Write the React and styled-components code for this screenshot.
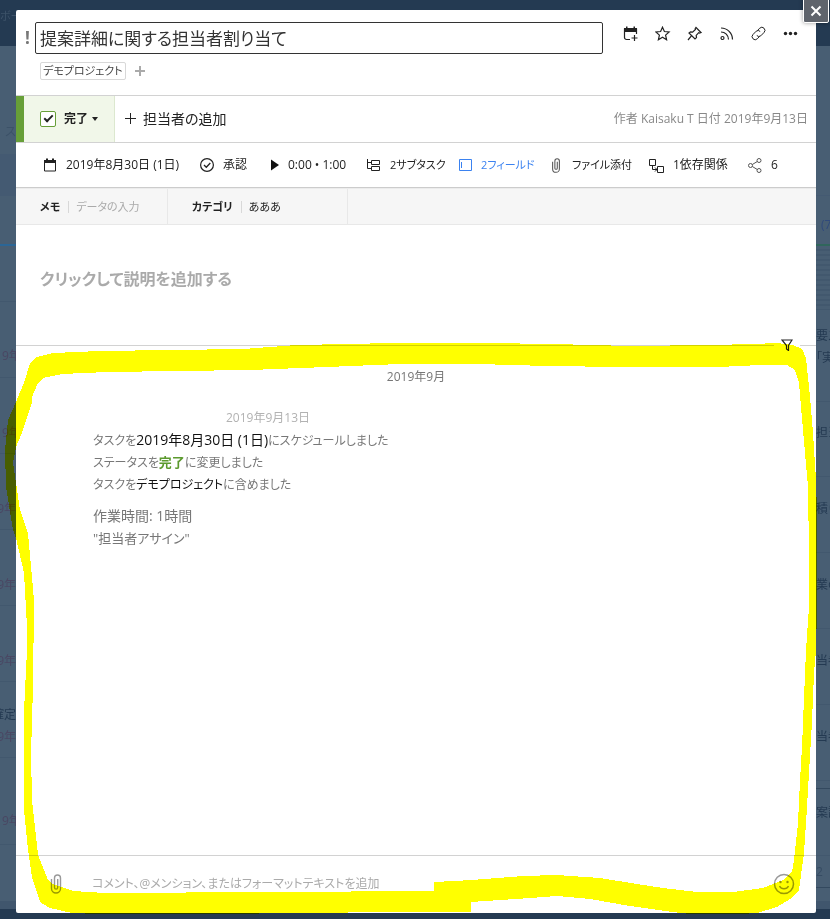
import styled, { createGlobalStyle, css } from "styled-components";

const GlobalStyle = createGlobalStyle`
  *, *::before, *::after {
    box-sizing: border-box;
  }
  body {
    margin: 0;
    background: #485e73;
  }
  body, button, input, select {
    font-family: "Open Sans", "Noto Sans CJK JP", sans-serif;
    font-feature-settings: "palt";
    font-size: 12px;
    line-height: 16px;
    color: #222;
  }
  button {
    padding: 0;
    border: 0;
    background: none;
    cursor: pointer;
  }
  svg {
    display: block;
    flex: none;
  }
`;

const Page = styled.div`
  position: relative;
  min-height: 100vh;
  display: flex;
`;

/* ---- dimmed board behind the dialog ---- */

const Board = styled.div`
  position: absolute;
  inset: 0;
  display: flex;
  flex-direction: column;
  overflow: hidden;
`;

const BoardHeader = styled.div`
  flex: none;
  height: 46px;
  padding-top: 4px;
  background: #243a52;
  color: #3d5269;
  font-size: 11px;
  line-height: 24px;
  white-space: nowrap;
`;

const BoardBody = styled.div`
  flex: 1;
  min-height: 0;
  display: flex;
  justify-content: space-between;
  background: #485e73;
`;

const BoardSide = styled.div`
  width: ${(p) => p.$width}px;
`;

const BoardFooter = styled.div`
  flex: none;
  height: 18px;
  border-top: 8px solid #40566d;
  background: #243a52;
`;

const BoardRow = styled.div`
  display: flex;
  flex-direction: column;
  justify-content: flex-end;
  align-items: ${(p) => (p.$end ? "flex-end" : "flex-start")};
  height: ${(p) => p.$height}px;
  padding-bottom: ${(p) => p.$bottom || 0}px;
  padding-left: ${(p) => p.$left || 0}px;
  border-bottom: ${(p) => p.$line || 1}px solid ${(p) => p.$border || "#42586e"};
  background: ${(p) => p.$bg || "transparent"};
  color: ${(p) => p.$color || "#243a52"};
  line-height: 22px;
  white-space: nowrap;
`;

const Thumbnail = styled.div`
  height: 64px;
  background: repeating-linear-gradient(#485e73 0 3px, #42586e 3px 5px);
`;

const DueDate = styled.span`
  color: #4a4763;
`;

/* ---- dialog ---- */

const Dialog = styled.main`
  position: relative;
  flex: 1;
  min-width: 0;
  display: flex;
  flex-direction: column;
  margin: 10px 14px 6px 16px;
  background: #fff;
  border-radius: 2px;
`;

const CloseButton = styled.button`
  position: absolute;
  top: -12px;
  right: -13px;
  width: 26px;
  height: 25px;
  display: flex;
  align-items: center;
  justify-content: center;
  border: 1px solid #fff;
  border-radius: 2px;
  background: #5f646c;
  box-shadow: 0 0 4px rgba(0, 0, 0, 0.4);
`;

const Header = styled.header`
  padding: 12px 17px 15px 8px;
  border-bottom: 1px solid #d2d2d2;
`;

const TitleRow = styled.div`
  display: flex;
  align-items: center;
`;

const Priority = styled.button`
  width: 11px;
  flex: none;
  font-size: 17px;
  font-weight: 700;
  color: #777;
  text-align: left;
  padding-left: 1px;
`;

const TitleInput = styled.input`
  flex: 1;
  min-width: 0;
  height: 32px;
  padding: 0 4px 2px;
  border: 1px solid #333;
  border-radius: 2px;
  outline: 0;
  background: #fff;
  font-size: 17px;
  color: #333;
`;

const TitleActions = styled.div`
  display: flex;
  align-items: center;
  gap: 16px;
  height: 24px;
  align-self: flex-start;
  margin-left: 20px;
`;

const ProjectRow = styled.div`
  display: flex;
  align-items: center;
  gap: 8px;
  margin: 8px 0 0 16px;
`;

const ProjectTag = styled.a`
  height: 18px;
  padding: 0 2px;
  border: 1px solid #d8d8d8;
  border-radius: 2px;
  font-size: 11px;
  line-height: 16px;
  color: #444;
  text-decoration: none;
`;

const StatusRow = styled.div`
  display: flex;
  align-items: center;
  height: 47px;
  border-bottom: 1px solid #d2d2d2;
`;

const Status = styled.div`
  display: flex;
  align-items: center;
  align-self: stretch;
  gap: 8px;
  width: 99px;
  padding-left: 16px;
  border-left: 8px solid #679f38;
  border-right: 1px solid #dce8cf;
  background: #f1f7e9;
`;

const StatusCheck = styled.input`
  appearance: none;
  width: 16px;
  height: 16px;
  margin: 0;
  border: 1px solid #679f38;
  border-radius: 2px;
  background: #fff;
  display: grid;
  place-items: center;

  &:checked::before {
    content: "";
    width: 9px;
    height: 5px;
    margin-bottom: 3px;
    border: solid #222;
    border-width: 0 0 2px 2px;
    rotate: -45deg;
  }
`;

const StatusButton = styled.button`
  display: flex;
  align-items: center;
  gap: 4px;
  font-weight: 600;
`;

const AddAssignee = styled.button`
  display: flex;
  align-items: center;
  gap: 6px;
  margin-left: 10px;
  font-size: 14px;
  line-height: 20px;
`;

const Author = styled.span`
  margin-left: auto;
  padding-right: 8px;
  font-size: 12px;
  color: #888;
`;

const Toolbar = styled.div`
  display: grid;
  grid-template-columns: 157px 70px 97px 91px 91px 100px 99px auto;
  align-items: center;
  height: 45px;
  padding-left: 27px;
  border-bottom: 1px solid #ccc;
`;

const Tool = styled.button`
  display: flex;
  align-items: center;
  gap: 9px;
  white-space: nowrap;
  font-size: ${(p) => (p.$kana ? 11 : 12)}px;
  color: ${(p) => (p.$active ? "#3b82f0" : "#222")};
`;

const Fields = styled.div`
  display: flex;
  height: 37px;
  border-top: 1px solid #ececec;
  border-bottom: 1px solid #e8e8e8;
  background: #f6f6f6;
`;

const Field = styled.label`
  display: flex;
  align-items: center;
  width: ${(p) => p.$width}px;
  padding-left: 24px;
  border-right: 1px solid #e8e8e8;
  font-size: 11px;
  font-weight: 600;
  white-space: nowrap;
`;

const FieldInput = styled.input`
  flex: 1;
  min-width: 0;
  height: 12px;
  margin-left: 8px;
  padding: 0 0 0 7px;
  border: 0;
  border-left: 1px solid #d8d8d8;
  outline: 0;
  background: none;
  font-size: 11px;

  &::placeholder {
    color: #aaa;
  }
`;

const Description = styled.button`
  height: 120px;
  padding: 0 24px 12px;
  text-align: left;
  font-size: 16px;
  font-weight: 600;
  color: #aaa;
`;

const Activity = styled.section`
  position: relative;
  flex: 1;
  border-top: 1px solid #d2d2d2;
  padding: 22px 16px;
`;

const FilterButton = styled.button`
  position: absolute;
  top: -9px;
  right: 16px;
  width: 26px;
  height: 16px;
  display: flex;
  align-items: center;
  justify-content: center;
  background: #fff;
`;

const Month = styled.h2`
  margin: 0;
  font-size: 12px;
  line-height: 18px;
  font-weight: 400;
  text-align: center;
  color: #777;
`;

const Entries = styled.div`
  margin: 21px 0 0 61px;
  color: #777;
`;

const EntryDate = styled.time`
  display: block;
  width: 350px;
  padding-bottom: 1px;
  font-size: 12px;
  line-height: 22px;
  text-align: center;
  color: #b2b2b2;
`;

const Entry = styled.p`
  margin: ${(p) => (p.$spaced ? "9px" : "0")} 0 0;
  font-size: ${(p) => p.$size || 12}px;
  line-height: 22px;
`;

const Strong = styled.span`
  color: #111;
  line-height: 16px;
  ${(p) =>
    p.$date &&
    css`
      font-size: 14px;
    `}
  ${(p) =>
    p.$done &&
    css`
      color: #5c9a2e;
      font-size: 13px;
      font-weight: 700;
    `}
`;

const Composer = styled.div`
  display: flex;
  align-items: center;
  height: 58px;
  padding: 0 21px 2px 33px;
  border-top: 1px solid #d2d2d2;
`;

const CommentInput = styled.input`
  flex: 1;
  min-width: 0;
  height: 24px;
  margin-left: 29px;
  padding: 0 0 1px;
  border: 0;
  outline: 0;
  background: none;
  font-size: 12px;

  &::placeholder {
    color: #aaa;
  }
`;

const Marker = styled.svg`
  position: absolute;
  inset: 0;
  width: 100%;
  height: 100%;
  pointer-events: none;
  mix-blend-mode: multiply;
`;

const Icon = ({ size = 14, height, color = "#222", children }) => (
  <svg
    width={size}
    height={height || size}
    viewBox={`0 0 ${size} ${height || size}`}
    fill="none"
    stroke={color}
    aria-hidden="true"
  >
    {children}
  </svg>
);

const Clip = ({ w, h, color }) => (
  <svg width={w} height={h} viewBox="0 0 14 20" fill="none" stroke={color} strokeWidth="1.4" aria-hidden="true">
    <path d="M2.500 5v9.500a4.500 4.500 0 0 0 9 0V4a3 3 0 0 0-6 0v9.500a1.600 1.600 0 0 0 3.200 0V5" />
  </svg>
);

const actions = [
  {
    label: "スケジュール",
    icon: (
      <>
        <path d="M7 13.500H3.500a2 2 0 0 1-2-2V3h12v5" strokeWidth="1.200" />
        <path d="M1 2h2V.5h1.500V2h6V.5H12V2h2v4H1z" fill="#222" stroke="none" />
        <path d="M11.500 9v6M8.500 12h6" strokeWidth="1.200" />
      </>
    ),
  },
  {
    label: "スター",
    icon: <path d="M7.500 1.200l1.900 4.300 4.700.5-3.500 3.100 1 4.600-4.100-2.400-4.100 2.400 1-4.600L.9 6l4.700-.5z" strokeWidth="1.200" />,
  },
  {
    label: "ピン",
    icon: (
      <path
        d="M9 1.500l5 5-1.500.5-.8-.3-2.500 2.700.3 2.200-1.500 1.400-6-6 1.500-1.200 2.100.3 2.800-2.600-.2-.8zM4.600 9.600L1 14"
        strokeWidth="1.200"
      />
    ),
  },
  {
    label: "フィード",
    icon: (
      <g strokeWidth="1.200">
        <circle cx="3.500" cy="12" r="1.500" />
        <path d="M2 6a7.500 7.500 0 0 1 7.500 7.500M2 2a11.500 11.500 0 0 1 11.500 11.500" />
      </g>
    ),
  },
  {
    label: "リンク",
    icon: (
      <path
        d="M6.500 4.500l2.200-2.300a3 3 0 0 1 4.300 4.300l-3.200 3.300a3 3 0 0 1-4-.3M8.500 10.500l-2.200 2.300A3 3 0 0 1 2 8.500l3.200-3.300a3 3 0 0 1 4 .3"
      />
    ),
  },
  {
    label: "その他",
    icon: (
      <g fill="#222" stroke="none">
        <circle cx="2.500" cy="7.500" r="1.700" />
        <circle cx="7.500" cy="7.500" r="1.700" />
        <circle cx="12.500" cy="7.500" r="1.700" />
      </g>
    ),
  },
];

const tools = [
  {
    text: "2019年8月30日 (1日)",
    icon: (
      <Icon>
        <path d="M1.500 3v10h11V3" />
        <path d="M1 2h2V.5h2V2h4V.5h2V2h2v3H1z" fill="#222" stroke="none" />
      </Icon>
    ),
  },
  {
    text: "承認",
    icon: (
      <Icon>
        <circle cx="7" cy="7" r="6.400" strokeWidth="1.200" />
        <path d="M4 7l2.300 2.300L10.300 5" strokeWidth="1.300" />
      </Icon>
    ),
  },
  {
    text: "0:00 • 1:00",
    icon: (
      <Icon size={9} height={14}>
        <path d="M1 1.500v11L9 7z" fill="#111" stroke="none" />
      </Icon>
    ),
  },
  {
    text: "2サブタスク",
    kana: true,
    icon: (
      <Icon>
        <path d="M.5 1v9.500h4M.5 4.500h4M4.500 2.500h8v4h-8zM4.500 8.500h8v4h-8z" />
      </Icon>
    ),
  },
  {
    text: "2フィールド",
    kana: true,
    active: true,
    icon: (
      <Icon color="#3b82f0">
        <path d="M1.500 1.500h12v11h-12zM3.500 4v6" />
      </Icon>
    ),
  },
  { text: "ファイル添付", kana: true, icon: <Clip w={14} h={15} color="#555" /> },
  {
    text: "1依存関係",
    icon: (
      <Icon size={15}>
        <path d="M.5 1.500h6v6h-6zM8.500 8.500h6v6h-6zM3.500 8v3.500H8M6 9.500l2 2-2 2" />
      </Icon>
    ),
  },
  {
    text: "6",
    icon: (
      <Icon height={15} color="#555">
        <circle cx="2.500" cy="7.500" r="2" />
        <circle cx="11" cy="2.500" r="2" />
        <circle cx="11" cy="12.500" r="2" />
        <path d="M4.300 6.500L9.300 3.500M4.300 8.500l5 3" />
      </Icon>
    ),
  },
];

const leftRows = [
  { height: 98, text: "ス", end: true, color: "#3c5268", border: "#485e73" },
  { height: 10, border: "#485e73" },
  { height: 42, bg: "#445a72", border: "#445a72" },
  { height: 50, line: 2, border: "#2b6696" },
  { height: 56 },
  { height: 76, bottom: 10, left: 2, due: "9年" },
  { height: 76, bottom: 9, left: 2, due: "9年" },
  { height: 76, bottom: 9, end: true, due: "9年" },
  { height: 76, bottom: 9, end: true, due: "9年" },
  { height: 76, bottom: 9, end: true, due: "9年" },
  { height: 76, bottom: 9, end: true, text: "確定", due: "9年" },
  { height: 87, bottom: 12, left: 2, due: "9年" },
];

const rightRows = [
  { height: 150, border: "#445a72" },
  { height: 50, bottom: 8, left: 5, text: "(7", color: "#304a7c", line: 2, border: "#30665c" },
  { thumbnail: true },
  { height: 92, bottom: 32, text: "要ス", second: "「実" },
  { height: 75, bottom: 32, text: "担当" },
  { height: 76, bottom: 32, text: "積り" },
  { height: 76, bottom: 32, text: "業の" },
  { height: 76, bottom: 32, text: "当者" },
  { height: 76, bottom: 32, text: "当者" },
  { height: 8, border: "#33495f" },
  { height: 67, bottom: 31, text: "案詳" },
  { height: 32, bottom: 4, text: "2", color: "#364c63", border: "#33495f" },
];

const BoardRows = ({ rows }) =>
  rows.map((r, i) =>
    r.thumbnail ? (
      <Thumbnail key={i} />
    ) : (
      <BoardRow
        key={i}
        $end={r.end}
        $left={r.left}
        $height={r.height}
        $bottom={r.bottom}
        $line={r.line}
        $border={r.border}
        $bg={r.bg}
        $color={r.color}
      >
        {r.text && <span>{r.text}</span>}
        {r.second && <span>{r.second}</span>}
        {r.due && <DueDate>{r.due}</DueDate>}
      </BoardRow>
    )
  );

const markerOuter =
  "M25 380L30 363L37 357L53 353L100 351L170 350L243 349L297 345L347 344L393 343L484 343L554 344L630 346L710 345L753 344L777 343L793 345L802 349L806 358L810 397L813 433L816 480L817 513V608L816 650L814 673L812 722L809 773L806 823L804 853L799 890L792 898L777 907L757 913L740 914H690L673 912L630 906L590 899L557 896L530 898L471 902V912H348L347 913L173 914H97L72 913L50 908L40 902L32 877L28 850L24 810V713L25 690L27 650L27 627L24 573L16 538L13 530L6 487L5 450L8 420L16 402Z";
const markerInner =
  "M38 383L43 378L62 374L107 372L177 371L250 370L327 367L400 364H477L547 366L622 367H718L760 365H787L795 370L799 383L803 430L808 487L809 553V607L806 650L802 747L800 780L798 823L794 860L792 872L783 880L763 888L733 892H697L663 888L637 884L600 878L557 875L523 876L472 880L434 882V891L267 892L105 893L73 891L53 884L48 880L38 855L32 800L31 753L33 687L34 600L28 533L20 510L16 483L13 463L16 447L22 433L32 403V397Z";

const App = () => {
  return (
    <>
      <GlobalStyle />
      <Page>
        <Board aria-hidden="true">
          <BoardHeader>ボー</BoardHeader>
          <BoardBody>
            <BoardSide $width={16}>
              <BoardRows rows={leftRows} />
            </BoardSide>
            <BoardSide $width={14}>
              <BoardRows rows={rightRows} />
            </BoardSide>
          </BoardBody>
          <BoardFooter />
        </Board>

        <Dialog>
          <Header>
            <TitleRow>
              <Priority aria-label="重要度">!</Priority>
              <TitleInput aria-label="タイトル" defaultValue="提案詳細に関する担当者割り当て" />
              <TitleActions>
                {actions.map((a) => (
                  <button key={a.label} type="button" aria-label={a.label}>
                    <Icon size={16}>{a.icon}</Icon>
                  </button>
                ))}
              </TitleActions>
            </TitleRow>
            <ProjectRow>
              <ProjectTag href="#project">デモプロジェクト</ProjectTag>
              <button type="button" aria-label="プロジェクトを追加">
                <Icon size={12} color="#aaa">
                  <path d="M6 1v10M1 6h10" strokeWidth="2" />
                </Icon>
              </button>
            </ProjectRow>
          </Header>

          <StatusRow>
            <Status>
              <StatusCheck type="checkbox" defaultChecked aria-label="完了にする" />
              <StatusButton type="button">
                完了
                <Icon size={6}>
                  <path d="M0 1h6L3 5z" fill="#222" stroke="none" />
                </Icon>
              </StatusButton>
            </Status>
            <AddAssignee type="button">
              <Icon size={12}>
                <path d="M5.500 0v11M0 5.500h11" />
              </Icon>
              担当者の追加
            </AddAssignee>
            <Author>作者 Kaisaku T 日付 2019年9月13日</Author>
          </StatusRow>

          <Toolbar>
            {tools.map((t) => (
              <Tool key={t.text} type="button" $active={t.active} $kana={t.kana}>
                {t.icon}
                {t.text}
              </Tool>
            ))}
          </Toolbar>

          <Fields>
            <Field $width={152}>
              メモ
              <FieldInput placeholder="データの入力" />
            </Field>
            <Field $width={180}>
              カテゴリ
              <FieldInput defaultValue="あああ" />
            </Field>
          </Fields>

          <Description type="button">クリックして説明を追加する</Description>

          <Activity>
            <FilterButton type="button" aria-label="フィルター">
              <Icon size={12}>
                <path d="M1 1h10L7.500 6.500v5l-2-1.500V6.500z" strokeWidth="1.200" />
              </Icon>
            </FilterButton>
            <Month>2019年9月</Month>
            <Entries>
              <EntryDate>2019年9月13日</EntryDate>
              <Entry>
                タスクを<Strong $date>2019年8月30日 (1日)</Strong>にスケジュールしました
              </Entry>
              <Entry>
                ステータスを<Strong $done>完了</Strong>に変更しました
              </Entry>
              <Entry>
                タスクを<Strong>デモプロジェクト</Strong>に含めました
              </Entry>
              <Entry $spaced $size={14}>
                作業時間: 1時間
              </Entry>
              <Entry $size={13}>"担当者アサイン"</Entry>
            </Entries>
          </Activity>

          <Composer>
            <button type="button" aria-label="ファイルを添付">
              <Clip w={14} h={20} color="#999" />
            </button>
            <CommentInput
              aria-label="コメント"
              placeholder="コメント、@メンション、またはフォーマットテキストを追加"
            />
            <button type="button" aria-label="絵文字">
              <Icon size={22} color="#999">
                <circle cx="11" cy="11" r="9.500" strokeWidth="1.500" />
                <path d="M6.500 13a5 5 0 0 0 9 0" strokeWidth="1.400" />
                <circle cx="7.500" cy="9" r="1.200" fill="#999" stroke="none" />
                <circle cx="14.500" cy="9" r="1.200" fill="#999" stroke="none" />
              </Icon>
            </button>
          </Composer>

          <CloseButton type="button" aria-label="閉じる">
            <Icon size={12} color="#fff">
              <path d="M1.500 1.500l9 9M10.500 1.500l-9 9" strokeWidth="2" />
            </Icon>
          </CloseButton>
        </Dialog>

        <Marker viewBox="0 0 830 919" preserveAspectRatio="none" aria-hidden="true">
          <path d={markerOuter + markerInner} fill="#ff0" fillRule="evenodd" shapeRendering="crispEdges" />
        </Marker>
      </Page>
    </>
  );
};

export default App;
